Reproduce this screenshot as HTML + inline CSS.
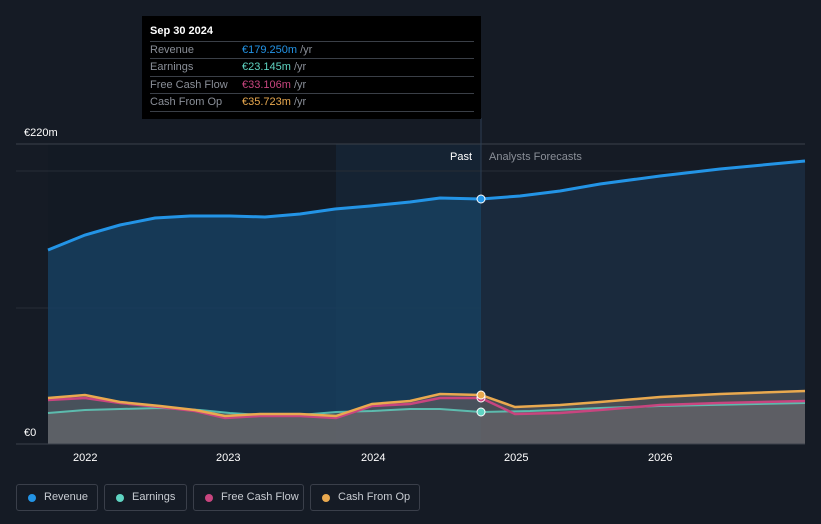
<!DOCTYPE html><html><head><style>
body{margin:0;background:#151b25;width:821px;height:524px;overflow:hidden;font-family:"Liberation Sans",sans-serif;position:relative}
.tt{position:absolute;left:142px;top:16px;width:339px;height:103px;background:#000;font-size:11px}
.tt .h{position:absolute;left:8px;top:9px;color:#fff;font-weight:bold}
.row{position:absolute;left:8px;width:324px;border-top:1px solid #3a3f47;height:17px;line-height:17px;color:#8a8f98;white-space:nowrap}
.row span{position:absolute;left:92px}
.leg{position:absolute;top:484px;height:27px;border:1px solid #3a3f4a;border-radius:3px;color:#c8ccd2;font-size:11px;line-height:25px;box-sizing:border-box;padding-left:27px;white-space:nowrap;overflow:hidden}
.leg i{position:absolute;left:11px;top:9px;width:8px;height:8px;border-radius:50%}
</style></head><body>
<svg width="821" height="524" style="position:absolute;left:0;top:0">
<rect x="48" y="144" width="433" height="300" fill="#131a24"/>
<rect x="336" y="144" width="145" height="300" fill="#152333"/>
<line x1="16" y1="144" x2="805" y2="144" stroke="#3a404a"/>
<line x1="16" y1="171" x2="805" y2="171" stroke="#262c36"/>
<line x1="16" y1="308" x2="805" y2="308" stroke="#262c36"/>
<line x1="481" y1="118" x2="481" y2="444" stroke="#2d3e52"/>
<path d="M48,250 L85,235 L120,225 L155,218 L190,216 L230,216 L265,217 L300,214 L335,209 L370,206 L410,202 L440,198 L481,199 L481,444 L48,444Z" fill="#17405f" opacity="0.85"/>
<path d="M481,199 L520,196 L560,191 L600,184 L660,176 L720,169 L805,161 L805,444 L481,444Z" fill="#1a2a3d"/>
<path d="M48,398 L85,395 L120,402 L160,406 L195,410 L225,416 L260,414 L300,414 L336,416 L372,404 L410,401 L440,394 L481,395 L515,407 L560,405 L600,402 L660,397 L720,394 L805,391 L805,444 L48,444Z" fill="#5a5a5e" opacity="0.75"/>
<path d="M48,413 L85,410 L120,409 L160,408 L200,410 L230,413 L260,415 L300,415 L336,412 L372,411 L410,409 L440,409 L481,412 L530,411 L600,408 L660,406 L805,403 L805,444 L48,444Z" fill="#6a6a6e" opacity="0.6"/>
<line x1="16" y1="444" x2="805" y2="444" stroke="#3a404a"/>
<path d="M48,250 L85,235 L120,225 L155,218 L190,216 L230,216 L265,217 L300,214 L335,209 L370,206 L410,202 L440,198 L481,199 L520,196 L560,191 L600,184 L660,176 L720,169 L805,161" fill="none" stroke="#2394e6" stroke-width="3"/>
<path d="M48,413 L85,410 L120,409 L160,408 L200,410 L230,413 L260,415 L300,415 L336,412 L372,411 L410,409 L440,409 L481,412 L530,411 L600,408 L660,406 L805,403" fill="none" stroke="#5fd4c2" stroke-width="2" opacity="0.8"/>
<path d="M48,400 L85,398 L120,403 L160,407 L195,411 L225,418 L260,416 L300,416 L336,418 L372,406 L410,404 L440,398 L481,398 L515,414 L560,413 L600,410 L660,405 L720,403 L805,401" fill="none" stroke="#c8457f" stroke-width="2.5"/>
<path d="M48,398 L85,395 L120,402 L160,406 L195,410 L225,416 L260,414 L300,414 L336,416 L372,404 L410,401 L440,394 L481,395 L515,407 L560,405 L600,402 L660,397 L720,394 L805,391" fill="none" stroke="#e9a94f" stroke-width="2.5"/>
<circle cx="481" cy="199" r="4" fill="#2394e6" stroke="#fff" stroke-width="1"/>
<circle cx="481" cy="398" r="4" fill="#c8457f" stroke="#fff" stroke-width="1"/>
<circle cx="481" cy="395" r="4" fill="#e9a94f" stroke="#fff" stroke-width="1"/>
<circle cx="481" cy="412" r="4" fill="#5fd4c2" stroke="#fff" stroke-width="1"/>
<g font-family="Liberation Sans" font-size="11" fill="#fff">
<text x="24" y="136">€220m</text><text x="24" y="436">€0</text>
<text x="450" y="160">Past</text><text x="489" y="160" fill="#8a8f98">Analysts Forecasts</text>
<text x="73" y="461">2022</text><text x="216" y="461">2023</text><text x="361" y="461">2024</text><text x="504" y="461">2025</text><text x="648" y="461">2026</text>
</g></svg>
<div class="tt"><div class="h">Sep 30 2024</div>
<div class="row" style="top:25px">Revenue<span><b style="font-weight:normal;color:#2394e6">€179.250m</b> /yr</span></div>
<div class="row" style="top:42px">Earnings<span><b style="font-weight:normal;color:#5fd4c2">€23.145m</b> /yr</span></div>
<div class="row" style="top:60px">Free Cash Flow<span><b style="font-weight:normal;color:#c8457f">€33.106m</b> /yr</span></div>
<div class="row" style="top:77px;border-bottom:1px solid #3a3f47">Cash From Op<span><b style="font-weight:normal;color:#e9a94f">€35.723m</b> /yr</span></div>
</div>
<div class="leg" style="left:16px;width:82px"><i style="background:#2394e6"></i>Revenue</div>
<div class="leg" style="left:104px;width:83px"><i style="background:#5fd4c2"></i>Earnings</div>
<div class="leg" style="left:193px;width:111px"><i style="background:#c8457f"></i>Free Cash Flow</div>
<div class="leg" style="left:310px;width:110px"><i style="background:#e9a94f"></i>Cash From Op</div>
</body></html>
